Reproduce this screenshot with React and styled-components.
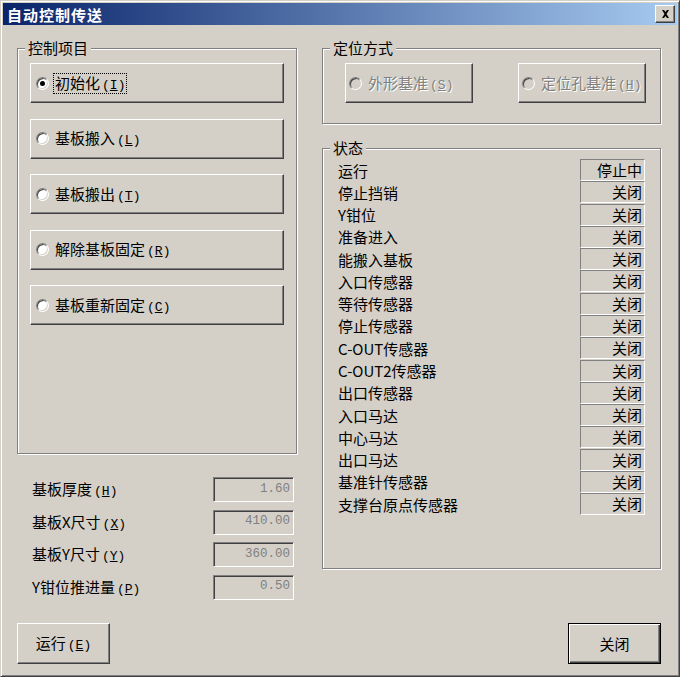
import styled, { createGlobalStyle } from "styled-components";

const GlobalStyle = createGlobalStyle`
  html, body {
    margin: 0;
    padding: 0;
    background: #d4d0c8;
  }
  body {
    font-family: "Noto Sans CJK SC", "Noto Sans", sans-serif;
  }
`;

const controlItems = [
  { label: "初始化", key: "I", checked: true },
  { label: "基板搬入", key: "L" },
  { label: "基板搬出", key: "T" },
  { label: "解除基板固定", key: "R" },
  { label: "基板重新固定", key: "C" },
];

const fields = [
  { label: "基板厚度", key: "H", value: "1.60" },
  { label: "基板X尺寸", key: "X", value: "410.00" },
  { label: "基板Y尺寸", key: "Y", value: "360.00" },
  { label: "Y钳位推进量", key: "P", value: "0.50" },
];

const statusRows = [
  ["运行", "停止中"],
  ["停止挡销", "关闭"],
  ["Y钳位", "关闭"],
  ["准备进入", "关闭"],
  ["能搬入基板", "关闭"],
  ["入口传感器", "关闭"],
  ["等待传感器", "关闭"],
  ["停止传感器", "关闭"],
  ["C-OUT传感器", "关闭"],
  ["C-OUT2传感器", "关闭"],
  ["出口传感器", "关闭"],
  ["入口马达", "关闭"],
  ["中心马达", "关闭"],
  ["出口马达", "关闭"],
  ["基准针传感器", "关闭"],
  ["支撑台原点传感器", "关闭"],
];

function Key({ k }) {
  return (
    <KeyHint>
      (<u>{k}</u>)
    </KeyHint>
  );
}

function RadioButton({ label, k, checked, disabled, $inset }) {
  const text = (
    <>
      {label}
      <Key k={k} />
    </>
  );
  return (
    <PushRadio type="button" disabled={disabled} $inset={$inset}>
      <RadioDot $checked={checked} $disabled={disabled} />
      {checked ? <FocusLabel>{text}</FocusLabel> : <span>{text}</span>}
    </PushRadio>
  );
}

export default function App() {
  return (
    <>
      <GlobalStyle />
      <Window>
        <TitleBar>
          <Title>自动控制传送</Title>
          <CloseBox type="button">
            <svg width="9" height="8" viewBox="0 0 9 8">
              <path
                d="M1 0h2l1.5 2 1.5-2h2L5.5 4 8 8H6L4.5 6 3 8H1l2.5-4z"
                fill="#000"
              />
            </svg>
          </CloseBox>
        </TitleBar>

        <Body>
          <Column>
            <GroupBox $height={414}>
              <Legend>控制项目</Legend>
              <ButtonStack>
                {controlItems.map((it) => (
                  <RadioButton
                    key={it.key}
                    label={it.label}
                    k={it.key}
                    checked={it.checked}
                    $inset={5}
                  />
                ))}
              </ButtonStack>
            </GroupBox>

            <FieldList>
              {fields.map((f) => (
                <FieldRow key={f.key}>
                  <FieldLabel>
                    {f.label}
                    <Key k={f.key} />
                  </FieldLabel>
                  <NumField readOnly value={f.value} />
                </FieldRow>
              ))}
            </FieldList>

            <DialogButton type="button">
              运行
              <Key k="E" />
            </DialogButton>
          </Column>

          <Column>
            <GroupBox $height={84}>
              <Legend>定位方式</Legend>
              <ModeRow>
                <RadioButton label="外形基准" k="S" disabled $inset={3} />
                <RadioButton label="定位孔基准" k="H" disabled $inset={3} />
              </ModeRow>
            </GroupBox>

            <GroupBox $height={429} $gap={16}>
              <Legend>状态</Legend>
              <StatusList>
                {statusRows.map(([name, value]) => (
                  <StatusRow key={name}>
                    <span>{name}</span>
                    <StatusValue>{value}</StatusValue>
                  </StatusRow>
                ))}
              </StatusList>
            </GroupBox>

            <DialogButton type="button" $default>
              关闭
            </DialogButton>
          </Column>
        </Body>
      </Window>
    </>
  );
}

const Window = styled.div`
  box-sizing: border-box;
  width: 680px;
  height: 677px;
  display: flex;
  flex-direction: column;
  padding: 2px;
  background: #d4d0c8;
  border: 1px solid;
  border-color: #d4d0c8 #404040 #404040 #d4d0c8;
  box-shadow: inset 1px 1px #fff, inset -1px -1px #808080;
  color: #000;
  font-size: 15px;
  line-height: 1;
`;

const TitleBar = styled.div`
  flex: none;
  height: 22px;
  display: flex;
  align-items: center;
  justify-content: space-between;
  padding: 0 2px 0 4px;
  background: linear-gradient(to right, #0a246a, #a6caf0);
`;

const Title = styled.span`
  color: #fff;
  font-weight: bold;
  font-size: 15px;
  letter-spacing: 1px;
`;

const CloseBox = styled.button`
  box-sizing: border-box;
  width: 20px;
  height: 18px;
  padding: 0;
  display: flex;
  align-items: center;
  justify-content: center;
  background: #d4d0c8;
  border: 1px solid;
  border-color: #fff #404040 #404040 #fff;
  box-shadow: inset -1px -1px #808080;
`;

const Body = styled.div`
  flex: 1;
  display: grid;
  grid-template-columns: 280px 339px;
  column-gap: 25px;
  padding: 15px 0 10px 14px;
  min-height: 0;
`;

const Column = styled.div`
  display: flex;
  flex-direction: column;
  min-height: 0;
`;

const GroupBox = styled.fieldset`
  box-sizing: border-box;
  height: ${(p) => p.$height}px;
  margin: ${(p) => p.$gap || 0}px 0 0;
  padding: 0;
  min-width: 0;
  border: 1px solid #808080;
  box-shadow: inset 1px 1px #fff, 1px 1px #fff;
`;

const Legend = styled.legend`
  margin-left: 7px;
  padding: 0 3px;
  height: 16px;
  line-height: 16px;
  background: #d4d0c8;
`;

const ButtonStack = styled.div`
  display: flex;
  flex-direction: column;
  gap: 15.5px;
  padding: 7px 12px 0;
`;

const ModeRow = styled.div`
  display: flex;
  justify-content: space-between;
  padding: 7px 14px 0 22px;

  & > button {
    width: 128px;
  }
`;

const PushRadio = styled.button`
  box-sizing: border-box;
  width: 100%;
  height: 40px;
  display: flex;
  align-items: center;
  gap: 6px;
  padding: 0 0 0 ${(p) => p.$inset}px;
  background: #d4d0c8;
  border: 1px solid;
  border-color: #fff #404040 #404040 #fff;
  box-shadow: inset -1px -1px #808080;
  font: inherit;
  line-height: 1;
  color: ${(p) => (p.disabled ? "#808080" : "#000")};
  text-shadow: ${(p) => (p.disabled ? "1px 1px #fff" : "none")};
  text-align: left;
`;

const RadioDot = styled.span`
  position: relative;
  box-sizing: border-box;
  flex: none;
  width: 13px;
  height: 13px;
  border-radius: 50%;
  border: 1px solid;
  border-color: #808080 #fff #fff #808080;
  background: ${(p) => (p.$disabled ? "#d4d0c8" : "#fff")};
  box-shadow: inset 1px 1px #404040, inset -1px -1px #d4d0c8;

  &::after {
    content: "";
    display: ${(p) => (p.$checked ? "block" : "none")};
    position: absolute;
    top: 3px;
    left: 3px;
    width: 5px;
    height: 5px;
    border-radius: 50%;
    background: #000;
  }
`;

const FocusLabel = styled.span`
  outline: 1px dotted #000;
  outline-offset: 1px;
`;

const KeyHint = styled.span`
  margin-left: 2px;
  font-family: "Liberation Mono", "DejaVu Sans Mono", monospace;
  font-size: 13px;

  u {
    text-underline-offset: 1px;
  }
`;

const FieldList = styled.div`
  display: flex;
  flex-direction: column;
  gap: 7.67px;
  margin-top: 23px;
`;

const FieldRow = styled.div`
  display: grid;
  grid-template-columns: 1fr 81px;
  align-items: center;
  height: 25px;
  padding: 0 3px 0 15px;
`;

const FieldLabel = styled.span`
  white-space: nowrap;
`;

const NumField = styled.input`
  box-sizing: border-box;
  width: 81px;
  height: 25px;
  padding: 0 3px 2px 0;
  border: 1px solid;
  border-color: #808080 #fff #fff #808080;
  box-shadow: inset 1px 1px #404040, inset -1px -1px #d4d0c8;
  background: #d4d0c8;
  color: #808080;
  text-align: right;
  font-family: "Liberation Mono", "DejaVu Sans Mono", monospace;
  font-size: 12.5px;
  outline: none;
`;

const StatusList = styled.div`
  padding: 3px 15px 0;
`;

const StatusRow = styled.div`
  display: flex;
  align-items: center;
  justify-content: space-between;
  height: 22.27px;
`;

const StatusValue = styled.div`
  box-sizing: border-box;
  width: 65px;
  height: 22px;
  padding-right: 2px;
  border: 1px solid;
  border-color: #808080 #fff #fff #808080;
  line-height: 20px;
  text-align: right;
`;

const DialogButton = styled.button`
  box-sizing: border-box;
  width: 93px;
  height: 41px;
  margin-top: auto;
  align-self: ${(p) => (p.$default ? "flex-end" : "flex-start")};
  padding: 0;
  background: #d4d0c8;
  font: inherit;
  line-height: 1;
  color: #000;
  border: 1px solid;
  border-color: ${(p) =>
    p.$default ? "#000" : "#fff #404040 #404040 #fff"};
  box-shadow: ${(p) =>
    p.$default
      ? "inset 1px 1px #fff, inset -1px -1px #404040, inset -2px -2px #808080"
      : "inset -1px -1px #808080"};
`;
